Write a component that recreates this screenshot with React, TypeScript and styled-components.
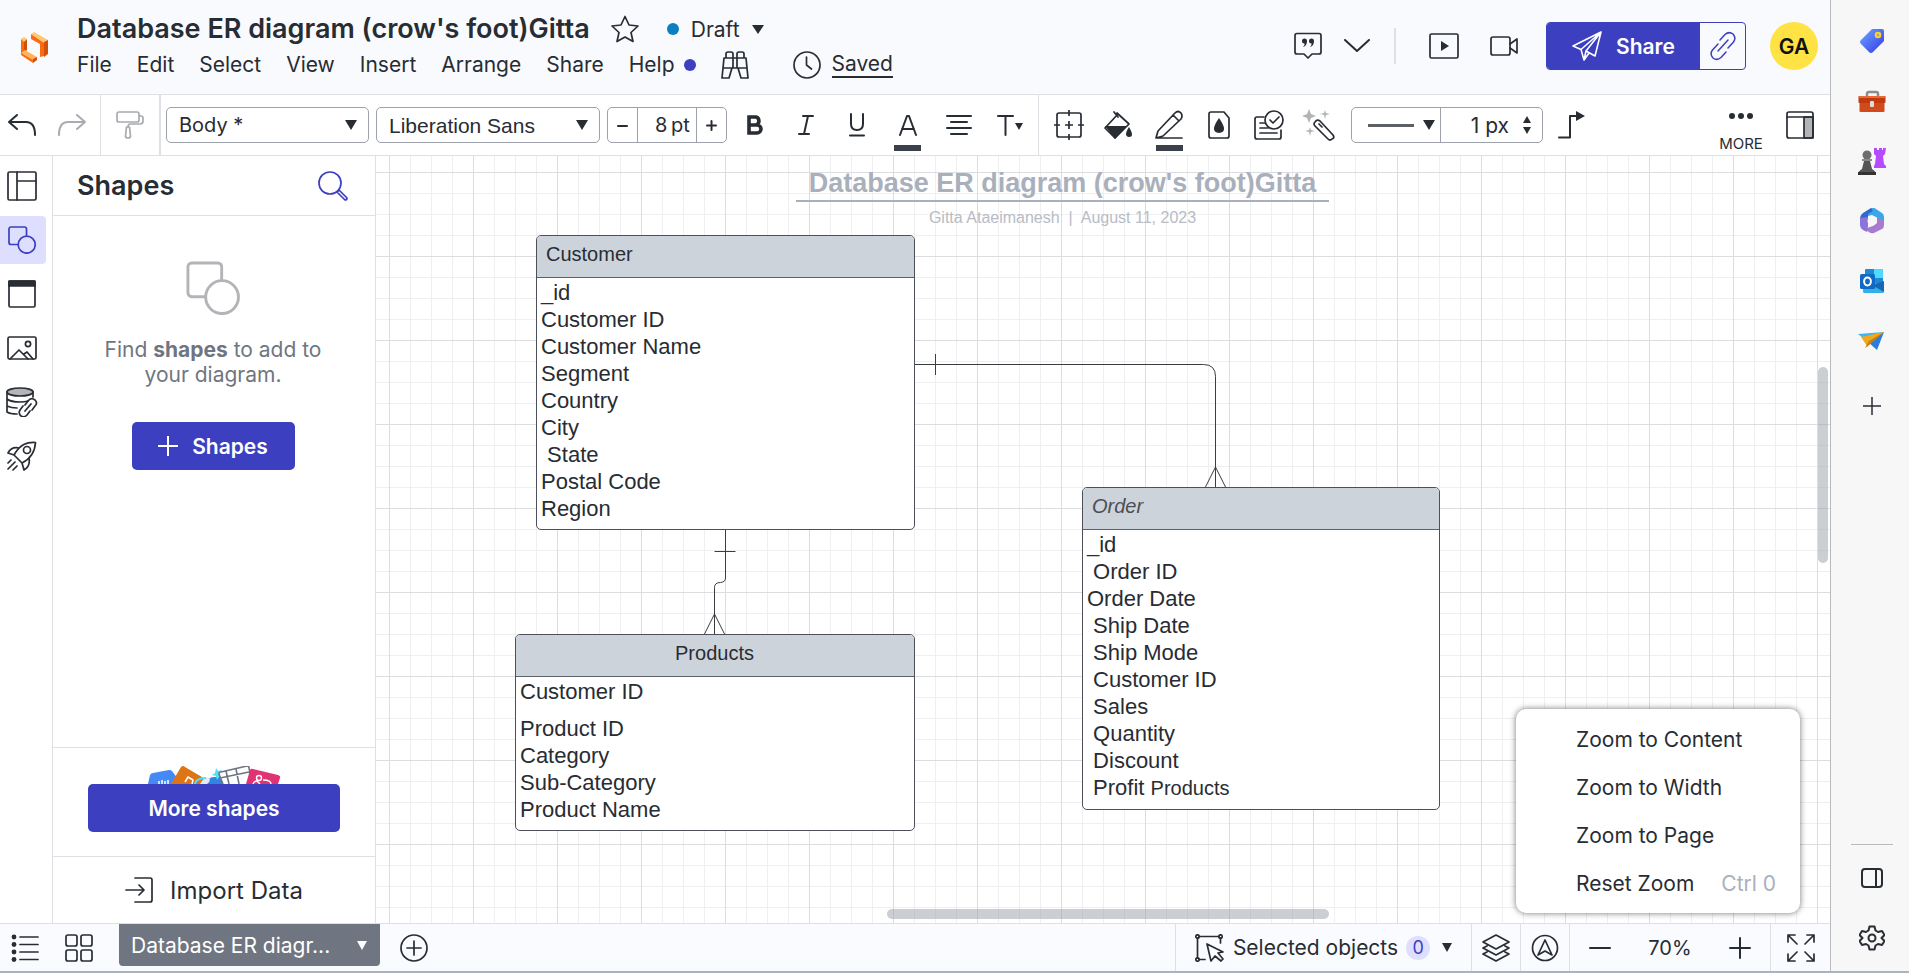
import React from "react";
import styled, { createGlobalStyle, css } from "styled-components";

const ink = "#282c33";
const brand = "#3c3fc0";
const line = "#dfe0e5";
const muted = "#6f7681";
const soft = "#a9b0bd";

const Global = createGlobalStyle`
  *, *::before, *::after { box-sizing: border-box; }
  body { margin: 0; font-family: Inter, "Liberation Sans", sans-serif; color: ${ink}; font-size: 21px; }
  button, input, select { font: inherit; color: inherit; margin: 0; }
  button { background: none; border: 0; padding: 0; cursor: pointer; }
  ul { list-style: none; margin: 0; padding: 0; }
  h1, h2, h3, p { margin: 0; }
`;

/* ---------- shell ---------- */

const Shell = styled.div`
  display: flex;
  flex-direction: column;
  height: 100vh;
  overflow: hidden;
  background: #fff;
`;

const Columns = styled.div`
  display: flex;
  flex: 1;
  min-height: 0;
`;

const Main = styled.div`
  display: flex;
  flex-direction: column;
  flex: 1;
  min-width: 0;
`;

const WindowEdge = styled.div`
  height: 2px;
  background: #abb2c0;
`;

const Workspace = styled.div`
  display: flex;
  flex: 1;
  min-height: 0;
`;

/* ---------- header ---------- */

const Header = styled.header`
  display: flex;
  height: 95px;
  background: #f9fafd;
  border-bottom: 1px solid ${line};
`;

const HomeLink = styled.a`
  display: flex;
  width: 77px;
  padding: 31px 0 0 20px;
`;

const TitleBlock = styled.div`
  display: flex;
  flex-direction: column;
  padding-top: 11px;
`;

const TitleRow = styled.div`
  display: flex;
  align-items: center;
  height: 36px;
`;

const DocTitle = styled.h1`
  font-size: 27px;
  font-weight: 600;
  line-height: 36px;
  white-space: nowrap;
`;

const StarButton = styled.button`
  display: flex;
  margin: 0 28px 0 21px;
`;

const StatusButton = styled.button`
  display: flex;
  align-items: center;
  gap: 12px;
`;

const Dot = styled.span<{ $color: string }>`
  width: 12px;
  height: 12px;
  border-radius: 50%;
  background: ${(p) => p.$color};
`;

const MenuRow = styled.nav`
  display: flex;
  align-items: center;
  height: 36px;
`;

const MenuButton = styled.button`
  display: flex;
  align-items: center;
  gap: 9px;
  margin-right: 25px;
  line-height: 24px;
`;

const SavedLink = styled.a`
  display: flex;
  align-items: center;
  gap: 11px;
  margin-left: 44px;
  color: ${ink};
  text-decoration: none;

  span {
    line-height: 24px;
    border-bottom: 2px solid ${ink};
  }
`;

const HeaderActions = styled.div`
  display: flex;
  align-items: center;
  height: 92px;
  margin-left: auto;
  padding-right: 12px;
`;

const ToolButton = styled.button<{ $w?: number; $faded?: boolean }>`
  display: flex;
  flex-direction: column;
  align-items: center;
  justify-content: center;
  flex: none;
  width: ${(p) => p.$w ?? 50}px;
  height: 60px;
  color: ${(p) => (p.$faded ? "#a8abb0" : ink)};
`;

const HeaderRule = styled.span`
  width: 2px;
  height: 36px;
  margin: 0 18px 0 13px;
  background: ${line};
`;

const ShareGroup = styled.div`
  display: flex;
  height: 48px;
  margin-left: 12px;
  border: 1px solid ${brand};
  border-radius: 4px;
  overflow: hidden;
`;

const ShareButton = styled.button`
  display: flex;
  align-items: center;
  gap: 14px;
  width: 153px;
  padding-left: 25px;
  background: ${brand};
  color: #fff;
  font-weight: 600;
`;

const LinkButton = styled.button`
  display: flex;
  align-items: center;
  justify-content: center;
  width: 45px;
  color: ${brand};
`;

const Avatar = styled.button`
  width: 48px;
  height: 48px;
  margin-left: 24px;
  border-radius: 50%;
  background: #ffe344;
  color: #111;
  font-weight: 600;
`;

/* ---------- toolbar ---------- */

const Toolbar = styled.div`
  display: flex;
  height: 61px;
  border-bottom: 1px solid ${line};
`;

const ToolSection = styled.div<{ $rule?: number }>`
  display: flex;
  align-items: center;
  border-right: ${(p) => p.$rule ?? 0}px solid ${line};
`;

const TextTools = styled(ToolSection)`
  gap: 7px;
  padding: 0 3px 0 5px;
`;

const DrawTools = styled(ToolSection)`
  padding-left: 5px;
`;

const ButtonStrip = styled.div`
  display: flex;
  margin-left: -5px;
`;

const EndTools = styled(ToolSection)`
  margin-left: auto;
`;

const fieldBox = css`
  display: flex;
  height: 36px;
  border: 1px solid #9da1ab;
  border-radius: 5px;
  background: #fff;
`;

const SelectBox = styled.label<{ $w: number; $arial?: boolean }>`
  ${fieldBox}
  position: relative;
  align-items: center;
  width: ${(p) => p.$w}px;
  font-family: ${(p) => (p.$arial ? '"Liberation Sans", sans-serif' : "inherit")};

  select {
    width: 100%;
    height: 100%;
    padding: 0 40px 0 12px;
    border: 0;
    background: none;
    appearance: none;
    font-size: ${(p) => (p.$arial ? 21 : 20)}px;
  }

  svg {
    position: absolute;
    right: 11px;
    pointer-events: none;
  }
`;

const Stepper = styled.div`
  ${fieldBox}
  width: 120px;
`;

const StepButton = styled.button`
  display: flex;
  align-items: center;
  justify-content: center;
  width: 29px;
`;

const SizeField = styled.label`
  display: flex;
  align-items: center;
  flex: 1;
  gap: 4px;
  padding-left: 17px;
  border: solid #9da1ab;
  border-width: 0 1px;
  font-size: 20px;

  input {
    width: 12px;
    padding: 0;
    border: 0;
    background: none;
  }
`;

const Swatch = styled.span`
  width: 27px;
  height: 6px;
  margin: 3px 0 -11px;
  background: #3a414a;
`;

const LineBox = styled.div`
  ${fieldBox}
  width: 192px;
  margin: 0 4px 0 7px;
`;

const LineStyle = styled.button`
  display: flex;
  align-items: center;
  gap: 9px;
  width: 89px;
  padding-left: 16px;
  border-right: 1px solid #9da1ab;
`;

const Stroke = styled.span`
  width: 46px;
  height: 3px;
  background: #5c5f64;
`;

const WidthField = styled.label`
  display: flex;
  align-items: center;
  flex: 1;

  input {
    width: 68px;
    padding: 0;
    border: 0;
    background: none;
    text-align: right;
  }
`;

const Spinner = styled.span`
  display: flex;
  flex-direction: column;
  gap: 4px;
  margin-left: 14px;

  button { display: flex; }
`;

const MoreLabel = styled.span`
  margin: 14px 0 -16px;
  font-size: 15px;
  line-height: 20px;
`;

/* ---------- left side ---------- */

const Rail = styled.nav`
  display: flex;
  flex-direction: column;
  gap: 6px;
  width: 53px;
  padding-top: 6px;
  border-right: 1px solid ${line};
`;

const RailButton = styled.button<{ $active?: boolean }>`
  display: flex;
  align-items: center;
  justify-content: center;
  width: 46px;
  height: 48px;
  padding-right: 2px;
  border-radius: 0 4px 4px 0;
  background: ${(p) => (p.$active ? "#dedeff" : "transparent")};
  color: ${(p) => (p.$active ? brand : ink)};
`;

const Panel = styled.aside`
  display: flex;
  flex-direction: column;
  width: 323px;
  border-right: 1px solid ${line};
`;

const PanelHead = styled.div`
  display: flex;
  align-items: center;
  justify-content: space-between;
  height: 60px;
  padding: 0 27px 0 24px;
  border-bottom: 1px solid ${line};

  h2 { font-size: 27px; font-weight: 600; }
  button { display: flex; color: ${brand}; }
`;

const EmptyState = styled.div`
  display: flex;
  flex-direction: column;
  align-items: center;
  flex: 1;
  padding: 45px 2px 0 0;
  color: #b3b4b8;

  p {
    margin: 22px 0 35px;
    color: ${muted};
    line-height: 25px;
    text-align: center;
  }
`;

const PrimaryButton = styled.button<{ $w: number }>`
  display: flex;
  align-items: center;
  justify-content: center;
  gap: 14px;
  width: ${(p) => p.$w}px;
  height: 48px;
  border-radius: 5px;
  background: ${brand};
  color: #fff;
  font-weight: 600;
`;

const MoreShapes = styled.div`
  display: flex;
  flex-direction: column;
  align-items: center;
  padding: 18px 0 24px;
  border-top: 1px solid ${line};
`;

const ImportButton = styled.button`
  display: flex;
  align-items: center;
  justify-content: center;
  gap: 17px;
  height: 67px;
  border-top: 1px solid ${line};
  font-size: 24px;
`;

/* ---------- canvas ---------- */

const Canvas = styled.main`
  position: relative;
  flex: 1;
  overflow: hidden;
  font-family: "Liberation Sans", Arial, sans-serif;
  background-color: #fff;
  background-image:
    linear-gradient(to right, #dcdde0 1px, transparent 1px),
    linear-gradient(to bottom, #dcdde0 1px, transparent 1px),
    linear-gradient(to right, #efeff1 1px, transparent 1px),
    linear-gradient(to bottom, #efeff1 1px, transparent 1px);
  background-size: 84px 84px, 84px 84px, 21px 21px, 21px 21px;
  background-position: 13px 16px;
`;

const PageTitle = styled.div`
  position: absolute;
  left: 420px;
  top: 10px;
  width: 533px;
  color: #a9b0bb;
  text-align: center;

  h2 {
    border-bottom: 2px solid #a9b0bb;
    font-size: 27px;
    line-height: 34px;
    white-space: nowrap;
  }

  p {
    margin-top: 6px;
    font-size: 16px;
    line-height: 20px;
    color: #b7bcc5;
    white-space: pre;
  }
`;

const Wires = styled.svg`
  position: absolute;
  left: 0;
  top: 0;
  width: 1200px;
  height: 700px;
  fill: none;
  stroke: #3a3d42;
`;

const Entity = styled.section<{ $x: number; $y: number; $w: number }>`
  position: absolute;
  left: ${(p) => p.$x}px;
  top: ${(p) => p.$y}px;
  width: ${(p) => p.$w}px;
  border: 1px solid #4d5058;
  border-radius: 5px;
  background: #fff;
  overflow: hidden;
  color: ${ink};
`;

const EntityHead = styled.h3<{ $center?: boolean; $italic?: boolean }>`
  height: 42px;
  padding: 6px 10px 0 9px;
  border-bottom: 1px solid #5d6169;
  background: #cdd3db;
  font-size: 20px;
  font-weight: 400;
  line-height: 24px;
  font-style: ${(p) => (p.$italic ? "italic" : "normal")};
  color: ${(p) => (p.$italic ? "#4b4e54" : ink)};
  text-align: ${(p) => (p.$center ? "center" : "left")};
`;

const Fields = styled.ul`
  padding: 1px 0 7px 4px;
  font-size: 22px;
  line-height: 27px;

  li { white-space: pre; }
`;

const GapField = styled.li`
  margin-bottom: 10px;
`;

const SmallText = styled.span`
  font-size: 20px;
`;

const Scrollbar = styled.div<{ $vertical?: boolean }>`
  position: absolute;
  border-radius: 5px;
  background: rgba(160, 165, 175, 0.55);
  ${(p) =>
    p.$vertical
      ? css`right: 2px; top: 211px; width: 10px; height: 196px;`
      : css`left: 511px; bottom: 4px; width: 442px; height: 10px;`}
`;

const ZoomMenu = styled.div`
  position: absolute;
  right: 30px;
  bottom: 10px;
  display: flex;
  flex-direction: column;
  width: 284px;
  padding: 6px 0;
  border-radius: 10px;
  background: #fff;
  box-shadow: 0 0 6px rgba(0, 0, 0, 0.55);
  font-family: Inter, "Liberation Sans", sans-serif;
`;

const ZoomItem = styled.button`
  display: flex;
  align-items: center;
  justify-content: space-between;
  height: 48px;
  padding: 0 24px 0 60px;

  kbd { font: inherit; color: ${soft}; }
`;

/* ---------- bottom bar ---------- */

const BottomBar = styled.footer`
  display: flex;
  height: 48px;
  background: #fafbfe;
  border-top: 1px solid ${line};
`;

const BarButton = styled.button<{ $w: number }>`
  display: flex;
  align-items: center;
  justify-content: center;
  width: ${(p) => p.$w}px;
`;

const PageTab = styled.button`
  display: flex;
  align-items: center;
  justify-content: space-between;
  width: 261px;
  height: 42px;
  margin-left: 11px;
  padding: 0 13px 0 12px;
  border-radius: 0 0 4px 4px;
  background: ${muted};
  color: #fff;
`;

const BarEnd = styled.div`
  display: flex;
  margin-left: auto;
`;

const BarGroup = styled.div<{ $w: number }>`
  display: flex;
  align-items: center;
  justify-content: center;
  width: ${(p) => p.$w}px;
  border-left: 1px solid ${line};
`;

const Selected = styled.button`
  display: flex;
  align-items: center;
  gap: 8px;
`;

const Count = styled.span`
  width: 24px;
  height: 24px;
  margin-right: 4px;
  border-radius: 50%;
  background: #dedeff;
  color: ${brand};
  font-size: 18px;
  line-height: 24px;
  text-align: center;
`;

const Percent = styled.span`
  width: 80px;
  font-size: 20px;
  text-align: center;
`;

/* ---------- browser sidebar ---------- */

const EdgeBar = styled.aside`
  display: flex;
  flex-direction: column;
  align-items: center;
  width: 79px;
  padding: 11px 0 3px 4px;
  background: #f7f7f7;
  border-left: 1px solid #b9babd;
`;

const EdgeButton = styled.button`
  display: flex;
  align-items: center;
  justify-content: center;
  width: 48px;
  height: 60px;
`;

const AddButton = styled(EdgeButton)`
  margin-top: 5px;
`;

const EdgeFoot = styled.div`
  display: flex;
  flex-direction: column;
  align-items: center;
  width: 42px;
  margin-top: auto;
  padding-top: 3px;
  border-top: 1px solid #b9babd;
`;

/* ---------- icons ---------- */

type IconProps = { w: number; h: number; sw?: number; children: React.ReactNode };
const Icon = ({ w, h, sw = 1.7, children }: IconProps) => (
  <svg
    width={w}
    height={h}
    viewBox={`0 0 ${w} ${h}`}
    fill="none"
    stroke="currentColor"
    strokeWidth={sw}
    strokeLinecap="round"
    strokeLinejoin="round"
    aria-hidden="true"
  >
    {children}
  </svg>
);

const Solid = { fill: "currentColor", stroke: "none" };

const Caret = ({ w = 12, h = 10 }: { w?: number; h?: number }) => (
  <Icon w={w} h={h}><path d={`M0 0H${w}L${w / 2} ${h}z`} {...Solid} /></Icon>
);

const Logo = () => (
  <svg width="28" height="32" viewBox="0 0 28 32" aria-label="Lucid">
    <path d="M1 8 4 10v12l9 6v4L1 24z" fill="#f96b13" />
    <path d="M4 10 7 8v11l-3 3z" fill="#d2500a" />
    <path d="M1 8 4 6l3 2-3 3z" fill="#ffc773" />
    <path d="M1 22 5 19l12 7-4 3z" fill="#ffb45c" />
    <path d="M13 28l4-2v3l-4 3z" fill="#d2500a" />
    <path d="M11 3 24 11v14l-4 1V13l-9-5z" fill="#f96b13" />
    <path d="M11 3 14 1l14 8-4 3z" fill="#ffc773" />
    <path d="M24 11 28 9v14l-4 3z" fill="#d2500a" />
  </svg>
);

const Binoculars = () => (
  <Icon w={28} h={28}>
    <path d="M5 7V3q0-2 2-2h3q2 0 2 2v4M16 7V3q0-2 2-2h3q2 0 2 2v4M3 7h9v10H2zM16 7h9l1 10H16zM12 7h4v10h-4M2 17 1 27h7l3-10M26 17l1 10h-7l-3-10" />
  </Icon>
);

const Plane = () => (
  <Icon w={30} h={30} sw={1.6}>
    <path d="M29 1 1 15l8 3.500L29 1 23 25l-9-5L29 1M9 18.500 12 29l2-9M12 29l5-7" />
  </Icon>
);

const Chain = () => (
  <Icon w={26} h={30} sw={1.5}>
    <path d="M8 20 18 9M10 9l5-5.500q4-3.500 8-0.500 3.500 4 0.500 8L18 17M16 21l-5 5.500q-4 3.500-8 0.500-3.500-4-0.500-8L8 13" />
  </Icon>
);

const ShapesGlyph = ({ s, sw }: { s: number; sw: number }) => (
  <svg width={s} height={s} viewBox="0 0 28 28" fill="none" stroke="currentColor" strokeWidth={sw} aria-hidden="true">
    <path d="M10 18.500H3a2 2 0 0 1-2-2V3a2 2 0 0 1 2-2h13.500a2 2 0 0 1 2 2v7" />
    <circle cx="18.700" cy="18.700" r="8.500" />
  </svg>
);

const Teaser = () => (
  <svg width="134" height="18" viewBox="0 0 134 18" aria-hidden="true">
    <path d="M1 18 3 9q1-2 3-2l16-3q2 0 3 1l6 8v5z" fill="#4489f5" />
    <path d="M12 18v-3M15 18v-4M18 18v-3M21 18v-4" stroke="#fff" strokeWidth="1.500" />
    <path d="M24 18 34 1q2-2 4 0l22 13 1 4z" fill="#dd7415" />
    <path d="M38 16l3-5 5 3-1 4M41 11l5 3" stroke="#fff" strokeWidth="1.500" fill="none" />
    <path d="M57 18q4-7 10-7h8q7 2 9 7z" fill="#2f86e0" />
    <path d="M53 18q6-10 10-5 0 3-3 5z" fill="#e6e9f4" />
    <path d="M48 18q1-6 11-6" stroke="#50e0ff" strokeWidth="2" fill="none" />
    <path d="M69 2l2 3 4-1-2 4 3 3-4 0-2 3-1-4-4-1 3-2z" fill="#50e0ff" />
    <path d="M76 18 72 8q0-2 2-2l26-6q2 0 2 2l3 16M73 12l29-6M82 18 79 5M92 18 89 3" stroke={muted} strokeWidth="1.600" fill="#fff" />
    <path d="M99 18 103 4q1-2 3-1l25 6q3 1 2 3l-2 6z" fill="#e03374" />
    <circle cx="112" cy="12" r="2.500" stroke="#fff" strokeWidth="1.400" fill="none" />
    <path d="M106 18q1-3 4-3l3 3M116 14q8 0 8 4" stroke="#fff" strokeWidth="1.400" fill="none" />
  </svg>
);

const railIcons: [string, React.ReactNode][] = [
  ["Documents", <Icon w={30} h={30}><rect x="1" y="1" width="28" height="28" rx="1.500" /><path d="M10 1v28M10 10h19" /></Icon>],
  ["Shapes", <ShapesGlyph s={28} sw={1.7} />],
  ["Containers", <Icon w={28} h={28}><rect x="1" y="1" width="26" height="26" rx="1.500" /><path d="M1 1h26v5H1z" fill="currentColor" /></Icon>],
  ["Images", <Icon w={30} h={24}><rect x="1" y="1" width="28" height="22" rx="1.500" /><circle cx="21" cy="8" r="2.600" /><path d="M3 23l9-9 9 9M17 18l3-2 6 7" /></Icon>],
  ["Data", (
    <Icon w={32} h={30}>
      <ellipse cx="14" cy="5" rx="13" ry="4" fill="#b3b4b8" />
      <path d="M1 5v20q3 2 10 2M27 5v5M1 12q4 3 13 3 5 0 8-1M1 19q4 2 10 2" />
      <path d="M19 24l6-7M19 18l3-4q3-4 7-1 3 3 0 6l-3 4M24 24l-3 4q-3 3-6 1-3-3-1-6l3-4" />
    </Icon>
  )],
  ["Launch", (
    <Icon w={30} h={30}>
      <path d="M28.500 1.500C20 1 13 3 7 14l8 8c10-5 13-12 13.500-20.500zM12 7c-5-1-9 1-11 5l6 2M22 17c1 5 0 9-5 12l-2-7" />
      <circle cx="20" cy="9" r="3.500" />
      <path d="M4 19l-3 3M8 21l-7 7M10 25l-4 4" />
    </Icon>
  )],
];

const textIcons: [string, React.ReactNode][] = [
  ["Bold", <Icon w={18} h={20} sw={3.6}><path d="M3 2h7a4.200 4.200 0 0 1 0 8H3zM3 10h8a4 4 0 0 1 0 8H3z" strokeLinejoin="miter" /></Icon>],
  ["Italic", <Icon w={16} h={20} sw={2}><path d="M5 1h10M1 19h10M10 1 6 19" /></Icon>],
  ["Underline", <Icon w={18} h={24} sw={2}><path d="M3 1v10q0 6 6 6t6-6V1M2 22.500h14" /></Icon>],
  ["Text colour", <><Icon w={20} h={32} sw={2}><path d="M2 25 9 6h2l7 19M4 19h12" /></Icon><Swatch /></>],
  ["Alignment", <Icon w={26} h={22} sw={2}><path d="M1 2h24M5 8h16M1 14h24M5 20h16" /></Icon>],
  ["Text options", <Icon w={28} h={22} sw={2}><path d="M2 2h15M9.500 2v19" /><path d="M19 9h8l-4 7z" {...Solid} /></Icon>],
];

const drawIcons: [string, React.ReactNode][] = [
  ["Borders", <Icon w={30} h={30}><rect x="3" y="3" width="24" height="24" rx="2" /><path d="M15 0v6M15 24v6M0 15h6M24 15h6M15 11v8M11 15h8" strokeLinecap="butt" /></Icon>],
  ["Fill", <Icon w={30} h={28}><path d="M10 1l4 5M14 3 1 17l10 10 14-14L13 2" /><path d="M1 15h22L11 28zM25 16q6 10 0 10-6-1 0-10z" {...Solid} /></Icon>],
  ["Line colour", <><Icon w={28} h={32}><path d="M1 28l2-7L20 3q3-3 6 0 2 3 0 6L8 26zM18 5l6 6M1 28h26" /></Icon><Swatch /></>],
  ["Opacity", <Icon w={22} h={28}><path d="M3 1h13l5 6v18q0 2-2 2H3q-2 0-2-2V3q0-2 2-2z" /><path d="M11 7q10 14 0 15-10-1 0-15z" {...Solid} /></Icon>],
  ["Conditional format", <Icon w={30} h={30}><path d="M10 7H3q-2 0-2 2v18q0 2 2 2h22q2 0 2-2V20M6 13h5M6 18h8M6 23h17" /><circle cx="20" cy="10" r="9" /><path d="M16 10l3 3 6-6" /></Icon>],
  ["Magic", <Icon w={34} h={32}><path d="M13 13q2-3 5-1l13 14q2 3-1 4-2 2-4 0L13 17q-2-2 0-4zM17 15l3 3" /><path d="M7 0l2 5 5 2-5 2-2 5-2-5-5-2 5-2zM23 1l1 3 4 1-4 1-1 4-1-4-4-1 4-1zM8 18l1 3 4 1-4 1-1 4-1-4-4-1 4-1z" fill="#b3b4b8" stroke="none" /></Icon>],
];

const edgeIcons: [string, React.ReactNode][] = [
  ["Shopping", (
    <svg width="24" height="26" viewBox="0 0 24 26">
      <defs><linearGradient id="tag" x1="0" y1="0" x2="1" y2="1"><stop offset="0" stopColor="#6ea8ff" /><stop offset="1" stopColor="#3436e8" /></linearGradient></defs>
      <path d="M12 1h10q2 0 2 2v10L13 24q-2 2-4 0l-8-8q-2-2 0-4z" fill="url(#tag)" />
      <circle cx="18" cy="7" r="2.300" fill="#9a9ec0" stroke="#ffd21f" strokeWidth="2" />
    </svg>
  )],
  ["Tools", (
    <svg width="28" height="22" viewBox="0 0 28 22">
      <path d="M9 7V4q0-2 2-2h7q2 0 2 2v3" stroke="#8b8d90" strokeWidth="2.500" fill="none" />
      <rect x="1.500" y="12" width="25" height="10" rx="1" fill="#d04a1b" />
      <rect x="0.500" y="6" width="27" height="7" rx="1" fill="#bf3a10" />
      <rect x="0.500" y="6" width="27" height="2" rx="1" fill="#ea6a34" />
      <rect x="12" y="11" width="4" height="6" rx="1" fill="#dcdcdc" />
    </svg>
  )],
  ["Games", (
    <svg width="28" height="28" viewBox="0 0 28 28">
      <path d="M16 1h3v2h2V1h3v2h1V1h3l-1 6-2 2 1 8 2 2v2H16v-2l1-2 1-8-2-2z" fill="#b44bff" />
      <circle cx="9" cy="8" r="4.500" fill="#6d6d6d" />
      <path d="M4 12h10v2H4z" fill="#8a8a8a" />
      <path d="M6 14h6l2 8q4 2 4 6H0q0-4 4-6z" fill="#555" />
      <path d="M0 25h18v3H0z" fill="#333" />
    </svg>
  )],
  ["Office", (
    <svg width="24" height="26" viewBox="0 0 24 26">
      <path d="M11 0 3 5Q0 7 0 10v8q1-3 4-5l4-2V7l7-5q-2-3-4-2z" fill="#3168cf" />
      <path d="M11 0q3-1 5 1l6 4q2 1 2 4v6l-8-6-4-2-4 1V6l5-3z" fill="#38a9e6" />
      <path d="M24 13v4q0 3-2 4l-8 4q-3 1-5-1l-5-3 9-3 4-3V9z" fill="#a77bd2" />
      <path d="M0 10v7q0 3 3 5l4 2 1-6V9z" fill="#8c74dc" />
      <circle cx="12" cy="13" r="4.500" fill="#f7f7f7" />
    </svg>
  )],
  ["Outlook", (
    <svg width="24" height="26" viewBox="0 0 24 26">
      <rect x="5" y="1" width="18" height="18" rx="1" fill="#1e8ad6" />
      <path d="M14 1h9v9h-9z" fill="#50d9ff" />
      <path d="M4 25q-1 0-1-2v-8h21v8q0 2-1 2z" fill="#32b0ec" />
      <path d="M24 13v11L12 17z" fill="#1467b0" />
      <rect x="0" y="6" width="15" height="15" rx="1.500" fill="#1069c4" />
      <ellipse cx="7.500" cy="13.500" rx="3.400" ry="3.900" fill="none" stroke="#fff" strokeWidth="2" />
    </svg>
  )],
  ["Drop", (
    <svg width="28" height="22" viewBox="0 0 28 22">
      <path d="M0 4 26 2 10 12z" fill="#3cb6f2" />
      <path d="M26 2 19 20l-9-8z" fill="#2a7de0" />
      <path d="M3 7 26 2 9 16z" fill="#f0a91c" />
      <path d="M7 18l4-7L26 2 10 16z" fill="#c77e10" />
    </svg>
  )],
];

/* ---------- page ---------- */

const customer = ["_id", "Customer ID", "Customer Name", "Segment", "Country", "City", " State", "Postal Code", "Region"];
const order = ["_id", " Order ID", "Order Date", " Ship Date", " Ship Mode", " Customer ID", " Sales", " Quantity", " Discount"];
const products = ["Product ID", "Category", "Sub-Category", "Product Name"];
const menus = ["File", "Edit", "Select", "View", "Insert", "Arrange", "Share"];

export default function App() {
  return (
    <Shell>
      <Global />
      <Columns>
        <Main>
          <Header>
            <HomeLink href="#home"><Logo /></HomeLink>
            <TitleBlock>
              <TitleRow>
                <DocTitle>Database ER diagram (crow's foot)Gitta</DocTitle>
                <StarButton aria-label="Favourite">
                  <Icon w={28} h={28}><path d="M14 1.500l4 8.500 9 1-7 6.500 2 9-8-4.500-8 4.500 2-9L1 11l9-1z" /></Icon>
                </StarButton>
                <StatusButton><Dot $color="#0b7fc0" />Draft<Caret w={12} h={9} /></StatusButton>
              </TitleRow>
              <MenuRow>
                {menus.map((m) => <MenuButton key={m}>{m}</MenuButton>)}
                <MenuButton>Help<Dot $color={brand} /></MenuButton>
                <Binoculars />
                <SavedLink href="#history">
                  <Icon w={28} h={28}><circle cx="14" cy="14" r="13" /><path d="M13.500 6v8l5 4" /></Icon>
                  <span>Saved</span>
                </SavedLink>
              </MenuRow>
            </TitleBlock>
            <HeaderActions>
              <ToolButton aria-label="Comments">
                <Icon w={28} h={28}>
                  <path d="M3 1.500h22q2 0 2 2V20q0 2-2 2h-7l-4 4-4-4H3q-2 0-2-2V3.500q0-2 2-2z" />
                  <path d="M8 9a2.500 2.500 0 1 1 5 0q0 5-4 6 2-2 1.500-3.500Q8 11.500 8 9zM15 9a2.500 2.500 0 1 1 5 0q0 5-4 6 2-2 1.500-3.500Q15 11.500 15 9z" {...Solid} />
                </Icon>
              </ToolButton>
              <ToolButton $w={48} aria-label="More comments"><Icon w={26} h={14} sw={2}><path d="M1 1l12 11L25 1" /></Icon></ToolButton>
              <HeaderRule />
              <ToolButton $w={60} aria-label="Present">
                <Icon w={30} h={26}><rect x="1" y="1" width="28" height="24" rx="1.500" /><path d="M12 8l8 5-8 5z" {...Solid} /></Icon>
              </ToolButton>
              <ToolButton $w={60} aria-label="Record">
                <Icon w={28} h={20}><rect x="1" y="1" width="19" height="18" rx="2" /><path d="M20 8l7-5v14l-7-5" /></Icon>
              </ToolButton>
              <ShareGroup>
                <ShareButton><Plane />Share</ShareButton>
                <LinkButton aria-label="Copy link"><Chain /></LinkButton>
              </ShareGroup>
              <Avatar>GA</Avatar>
            </HeaderActions>
          </Header>

          <Toolbar>
            <ToolSection $rule={1}>
              <ToolButton $w={44} aria-label="Undo"><Icon w={28} h={22} sw={2}><path d="M9 1 1 8l8 7M1 8h17q9 0 9 13" /></Icon></ToolButton>
              <ToolButton $w={56} $faded aria-label="Redo"><Icon w={28} h={22} sw={2}><path d="M19 1l8 7-8 7M27 8H10Q1 8 1 21" /></Icon></ToolButton>
            </ToolSection>
            <ToolSection $rule={2}>
              <ToolButton $w={58} $faded aria-label="Copy format">
                <Icon w={28} h={28}><rect x="1" y="1" width="22" height="10" rx="2" /><path d="M23 5h2q2 0 2 2v3q0 3-3 3H14q-2 0-2 3M10.500 16h3l1 9q0 2-2.500 2t-2.500-2z" /></Icon>
              </ToolButton>
            </ToolSection>
            <TextTools $rule={1}>
              <SelectBox $w={203}>
                <select aria-label="Text style"><option>Body *</option></select>
                <Caret />
              </SelectBox>
              <SelectBox $w={224} $arial>
                <select aria-label="Font"><option>Liberation Sans</option></select>
                <Caret />
              </SelectBox>
              <Stepper>
                <StepButton aria-label="Smaller"><Icon w={11} h={11} sw={2}><path d="M1 6h9" /></Icon></StepButton>
                <SizeField><input aria-label="Font size" defaultValue="8" />pt</SizeField>
                <StepButton aria-label="Larger"><Icon w={11} h={11} sw={2}><path d="M1 5.500h9M5.500 1v9" /></Icon></StepButton>
              </Stepper>
              <ButtonStrip>
                {textIcons.map(([name, icon]) => <ToolButton key={name} $w={51} aria-label={name}>{icon}</ToolButton>)}
              </ButtonStrip>
            </TextTools>
            <DrawTools>
              {drawIcons.map(([name, icon]) => <ToolButton key={name} aria-label={name}>{icon}</ToolButton>)}
              <LineBox>
                <LineStyle aria-label="Line style"><Stroke /><Caret /></LineStyle>
                <WidthField>
                  <input aria-label="Line width" defaultValue="1 px" />
                  <Spinner>
                    <button aria-label="Thicker"><Icon w={8} h={7}><path d="M0 7h8L4 0z" {...Solid} /></Icon></button>
                    <button aria-label="Thinner"><Icon w={8} h={7}><path d="M0 0h8L4 7z" {...Solid} /></Icon></button>
                  </Spinner>
                </WidthField>
              </LineBox>
              <ToolButton aria-label="Connector">
                <Icon w={28} h={28} sw={2}><path d="M1 26.500h11V5h9" /><path d="M18 0l9 5-9 5z" {...Solid} /></Icon>
              </ToolButton>
            </DrawTools>
            <EndTools>
              <ToolButton $w={58}>
                <Icon w={26} h={8}><circle cx="4" cy="4" r="3" {...Solid} /><circle cx="13" cy="4" r="3" {...Solid} /><circle cx="22" cy="4" r="3" {...Solid} /></Icon>
                <MoreLabel>MORE</MoreLabel>
              </ToolButton>
              <ToolButton $w={60} aria-label="Toggle panel">
                <Icon w={28} h={28}><path d="M18 6h9v21h-9z" fill="#b3b4b8" /><rect x="1" y="1" width="26" height="26" rx="2" /><path d="M1 6h26" /></Icon>
              </ToolButton>
            </EndTools>
          </Toolbar>

          <Workspace>
            <Rail>
              {railIcons.map(([name, icon]) => (
                <RailButton key={name} $active={name === "Shapes"} aria-label={name}>{icon}</RailButton>
              ))}
            </Rail>
            <Panel>
              <PanelHead>
                <h2>Shapes</h2>
                <button aria-label="Search shapes">
                  <Icon w={30} h={30}><circle cx="12" cy="12" r="11" /><path d="M19 21l2-2 8 8q0 2-2 2z" /></Icon>
                </button>
              </PanelHead>
              <EmptyState>
                <ShapesGlyph s={54} sw={1.5} />
                <p>Find <b>shapes</b> to add to<br />your diagram.</p>
                <PrimaryButton $w={163}>
                  <Icon w={20} h={20} sw={2}><path d="M10 0v20M0 10h20" /></Icon>Shapes
                </PrimaryButton>
              </EmptyState>
              <MoreShapes>
                <Teaser />
                <PrimaryButton $w={252}>More shapes</PrimaryButton>
              </MoreShapes>
              <ImportButton>
                <Icon w={28} h={26}><path d="M10 1h15q2 0 2 2v20q0 2-2 2H10M1 13h18M14 8l5 5-5 5" /></Icon>
                Import Data
              </ImportButton>
            </Panel>

            <Canvas>
              <PageTitle>
                <h2>Database ER diagram (crow's foot)Gitta</h2>
                <p>{"Gitta Ataeimanesh  |  August 11, 2023"}</p>
              </PageTitle>
              <Wires viewBox="0 0 1200 700">
                <path d="M538 208.500H827.500Q839.500 208.500 839.500 220.500V332M559.500 198v21M829 332l10.500-21 10.500 21" />
                <path d="M349.500 374v48q0 4-5 4.500-6 0-6 5V479M338.500 395.500h21M328 479l10.500-21 10.500 21" />
              </Wires>
              <Entity $x={160} $y={79} $w={379}>
                <EntityHead>Customer</EntityHead>
                <Fields>{customer.map((f) => <li key={f}>{f}</li>)}</Fields>
              </Entity>
              <Entity $x={139} $y={478} $w={400}>
                <EntityHead $center>Products</EntityHead>
                <Fields>
                  <GapField>Customer ID</GapField>
                  {products.map((f) => <li key={f}>{f}</li>)}
                </Fields>
              </Entity>
              <Entity $x={706} $y={331} $w={358}>
                <EntityHead $italic>Order</EntityHead>
                <Fields>
                  {order.map((f) => <li key={f}>{f}</li>)}
                  <li>{" Profit "}<SmallText>Products</SmallText></li>
                </Fields>
              </Entity>
              <Scrollbar $vertical />
              <Scrollbar />
              <ZoomMenu>
                <ZoomItem>Zoom to Content</ZoomItem>
                <ZoomItem>Zoom to Width</ZoomItem>
                <ZoomItem>Zoom to Page</ZoomItem>
                <ZoomItem>Reset Zoom<kbd>Ctrl 0</kbd></ZoomItem>
              </ZoomMenu>
            </Canvas>
          </Workspace>

          <BottomBar>
            <BarButton $w={50} aria-label="Page list">
              <Icon w={28} h={28}>
                <path d="M9 3h18M9 10.500h18M9 18h18M9 25.500h18" />
                {[3, 10.5, 18, 25.5].map((y) => <circle key={y} cx="3" cy={y} r="2.400" {...Solid} />)}
              </Icon>
            </BarButton>
            <BarButton $w={58} aria-label="Page grid">
              <Icon w={28} h={28}><rect x="1" y="1" width="11" height="11" rx="2" /><rect x="16" y="1" width="11" height="11" rx="2" /><rect x="1" y="16" width="11" height="11" rx="2" /><rect x="16" y="16" width="11" height="11" rx="2" /></Icon>
            </BarButton>
            <PageTab>Database ER diagr...<Caret w={10} h={9} /></PageTab>
            <BarButton $w={68} aria-label="Add page">
              <Icon w={28} h={28}><circle cx="14" cy="14" r="13" /><path d="M14 7v14M7 14h14" /></Icon>
            </BarButton>
            <BarEnd>
              <BarGroup $w={296}>
                <Selected>
                  <Icon w={30} h={28}>
                    <path d="M4 2.500h20M2.500 4v20M25.500 4v5M4 25.500h6M12 10l4 17 4-5 6 5 2-2-5-6 5-1z" />
                    <circle cx="2.500" cy="2.500" r="1.700" /><circle cx="25.500" cy="2.500" r="1.700" /><circle cx="2.500" cy="25.500" r="1.700" />
                  </Icon>
                  Selected objects
                  <Count>0</Count>
                  <Caret w={10} h={9} />
                </Selected>
              </BarGroup>
              <BarGroup $w={49}>
                <BarButton $w={28} aria-label="Layers">
                  <Icon w={28} h={28}><path d="M14 1l13 7-13 7L1 8zM5 12l-4 2 13 7 13-7-4-2M5 18l-4 2 13 7 13-7-4-2" /></Icon>
                </BarButton>
              </BarGroup>
              <BarGroup $w={49}>
                <BarButton $w={28} aria-label="Navigate">
                  <Icon w={28} h={28}><circle cx="14" cy="14" r="12.500" /><path d="M14 6l7 15-7-4-7 4z" /></Icon>
                </BarButton>
              </BarGroup>
              <BarGroup $w={201}>
                <BarButton $w={60} aria-label="Zoom out"><Icon w={22} h={22} sw={2}><path d="M1 11h20" /></Icon></BarButton>
                <Percent>70%</Percent>
                <BarButton $w={60} aria-label="Zoom in"><Icon w={22} h={22} sw={2}><path d="M1 11h20M11 1v20" /></Icon></BarButton>
              </BarGroup>
              <BarGroup $w={60}>
                <BarButton $w={28} aria-label="Full screen">
                  <Icon w={28} h={28}><path d="M1 8V1h7M20 1h7v7M27 20v7h-7M8 27H1v-7M1 1l9 9M27 1l-9 9M27 27l-9-9M1 27l9-9" /></Icon>
                </BarButton>
              </BarGroup>
            </BarEnd>
          </BottomBar>
        </Main>

        <EdgeBar>
          {edgeIcons.map(([name, icon]) => <EdgeButton key={name} aria-label={name}>{icon}</EdgeButton>)}
          <AddButton aria-label="Add"><Icon w={18} h={18} sw={1.5}><path d="M9 0v18M0 9h18" /></Icon></AddButton>
          <EdgeFoot>
            <EdgeButton aria-label="Split window">
              <Icon w={22} h={20} sw={2}><rect x="1" y="1" width="20" height="18" rx="3" /><path d="M15 1v18" /></Icon>
            </EdgeButton>
            <EdgeButton aria-label="Settings">
              <Icon w={26} h={26} sw={2}>
                <path d="M10.500 1.500h5l1 4 2.500 1.500 4-1 2.500 4-3 3 3 3-2.500 4-4-1-2.500 1.500-1 4h-5l-1-4L7 19l-4 1-2.500-4 3-3-3-3L3 6l4 1 2.500-1.500z" />
                <circle cx="13" cy="13" r="3.500" />
              </Icon>
            </EdgeButton>
          </EdgeFoot>
        </EdgeBar>
      </Columns>
      <WindowEdge />
    </Shell>
  );
}
